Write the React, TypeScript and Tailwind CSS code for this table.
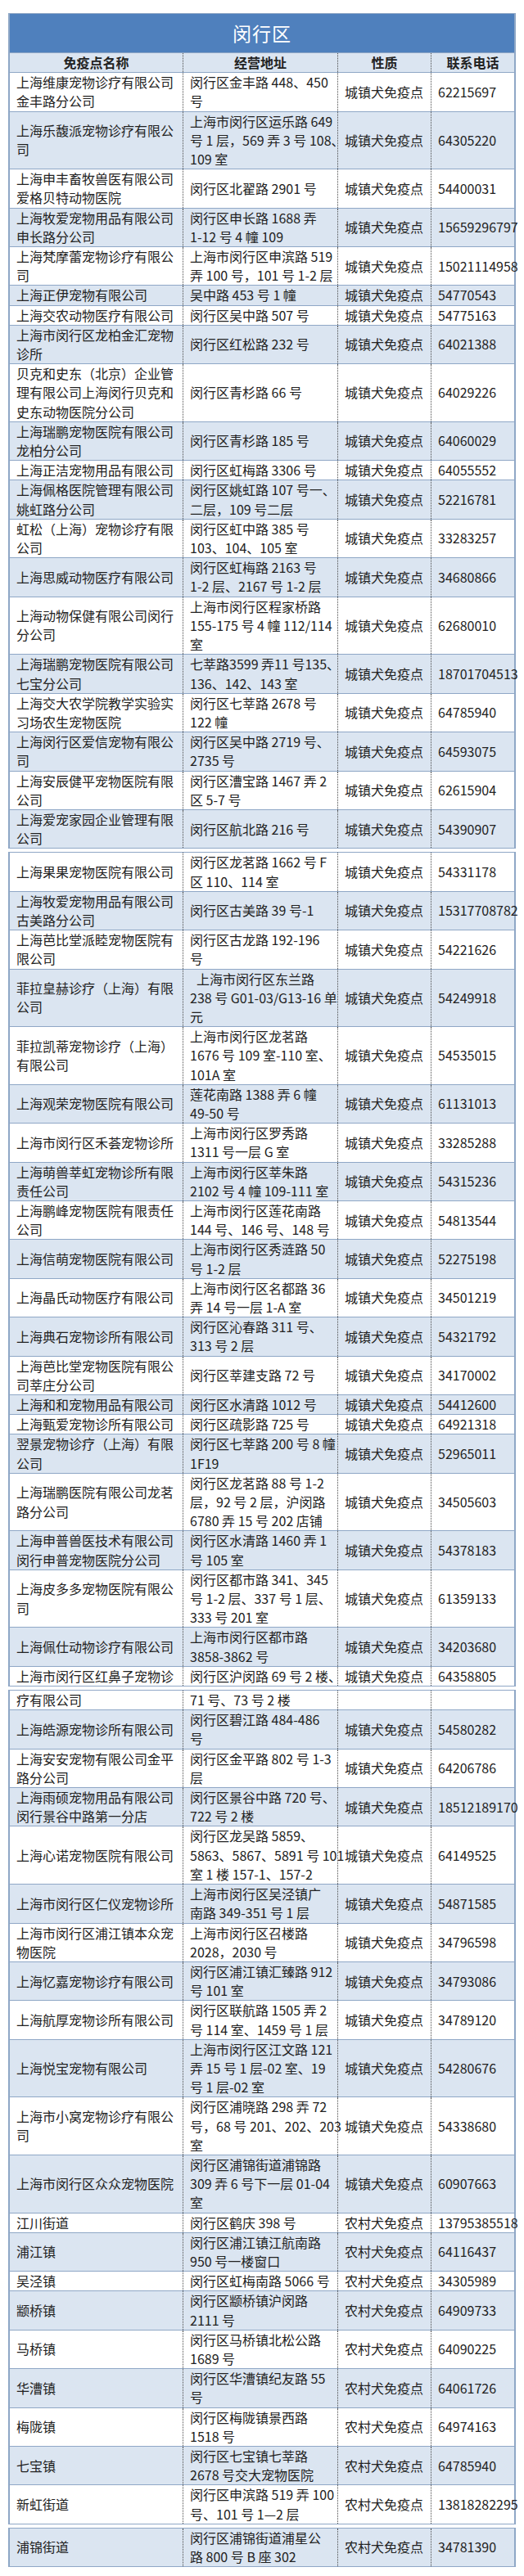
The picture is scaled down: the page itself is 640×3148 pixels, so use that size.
import React from 'react'

type Row = { n: string[]; a: string[]; k?: string; t?: string }

const CZ = '城镇犬免疫点'
const NC = '农村犬免疫点'

// 第一张表（带标题和表头）
const part1: Row[] = [
  { n: ['上海维康宠物诊疗有限公司', '金丰路分公司'], a: ['闵行区金丰路 448、450', '号'], k: CZ, t: '62215697' },
  { n: ['上海乐馥派宠物诊疗有限公', '司'], a: ['上海市闵行区运乐路 649', '号 1 层，569 弄 3 号 108、', '109 室'], k: CZ, t: '64305220' },
  { n: ['上海申丰畜牧兽医有限公司', '爱格贝特动物医院'], a: ['闵行区北翟路 2901 号'], k: CZ, t: '54400031' },
  { n: ['上海牧爱宠物用品有限公司', '申长路分公司'], a: ['闵行区申长路 1688 弄', '1-12 号 4 幢 109'], k: CZ, t: '15659296797' },
  { n: ['上海梵摩蕾宠物诊疗有限公', '司'], a: ['上海市闵行区申滨路 519', '弄 100 号，101 号 1-2 层'], k: CZ, t: '15021114958' },
  { n: ['上海正伊宠物有限公司'], a: ['吴中路 453 号 1 幢'], k: CZ, t: '54770543' },
  { n: ['上海交农动物医疗有限公司'], a: ['闵行区吴中路 507 号'], k: CZ, t: '54775163' },
  { n: ['上海市闵行区龙柏金汇宠物', '诊所'], a: ['闵行区红松路 232 号'], k: CZ, t: '64021388' },
  { n: ['贝克和史东（北京）企业管', '理有限公司上海闵行贝克和', '史东动物医院分公司'], a: ['闵行区青杉路 66 号'], k: CZ, t: '64029226' },
  { n: ['上海瑞鹏宠物医院有限公司', '龙柏分公司'], a: ['闵行区青杉路 185 号'], k: CZ, t: '64060029' },
  { n: ['上海正洁宠物用品有限公司'], a: ['闵行区虹梅路 3306 号'], k: CZ, t: '64055552' },
  { n: ['上海佩格医院管理有限公司', '姚虹路分公司'], a: ['闵行区姚虹路 107 号一、', '二层，109 号二层'], k: CZ, t: '52216781' },
  { n: ['虹松（上海）宠物诊疗有限', '公司'], a: ['闵行区虹中路 385 号', '103、104、105 室'], k: CZ, t: '33283257' },
  { n: ['上海思威动物医疗有限公司'], a: ['闵行区虹梅路 2163 号', '1-2 层、2167 号 1-2 层'], k: CZ, t: '34680866' },
  { n: ['上海动物保健有限公司闵行', '分公司'], a: ['上海市闵行区程家桥路', '155-175 号 4 幢 112/114', '室'], k: CZ, t: '62680010' },
  { n: ['上海瑞鹏宠物医院有限公司', '七宝分公司'], a: ['七莘路3599 弄11 号135、', '136、142、143 室'], k: CZ, t: '18701704513' },
  { n: ['上海交大农学院教学实验实', '习场农生宠物医院'], a: ['闵行区七莘路 2678 号', '122 幢'], k: CZ, t: '64785940' },
  { n: ['上海闵行区爱信宠物有限公', '司'], a: ['闵行区吴中路 2719 号、', '2735 号'], k: CZ, t: '64593075' },
  { n: ['上海安辰健平宠物医院有限', '公司'], a: ['闵行区漕宝路 1467 弄 2', '区 5-7 号'], k: CZ, t: '62615904' },
  { n: ['上海爱宠家园企业管理有限', '公司'], a: ['闵行区航北路 216 号'], k: CZ, t: '54390907' },
]

const part2: Row[] = [
  { n: ['上海果果宠物医院有限公司'], a: ['闵行区龙茗路 1662 号 F', '区 110、114 室'], k: CZ, t: '54331178' },
  { n: ['上海牧爱宠物用品有限公司', '古美路分公司'], a: ['闵行区古美路 39 号-1'], k: CZ, t: '15317708782' },
  { n: ['上海芭比堂派睦宠物医院有', '限公司'], a: ['闵行区古龙路 192-196', '号'], k: CZ, t: '54221626' },
  { n: ['菲拉皇赫诊疗（上海）有限', '公司'], a: ['\u2002上海市闵行区东兰路', '238 号 G01-03/G13-16 单', '元'], k: CZ, t: '54249918' },
  { n: ['菲拉凯蒂宠物诊疗（上海）', '有限公司'], a: ['上海市闵行区龙茗路', '1676 号 109 室-110 室、', '101A 室'], k: CZ, t: '54535015' },
  { n: ['上海观荣宠物医院有限公司'], a: ['莲花南路 1388 弄 6 幢', '49-50 号'], k: CZ, t: '61131013' },
  { n: ['上海市闵行区禾荟宠物诊所'], a: ['上海市闵行区罗秀路', '1311 号一层 G 室'], k: CZ, t: '33285288' },
  { n: ['上海萌兽莘虹宠物诊所有限', '责任公司'], a: ['上海市闵行区莘朱路', '2102 号 4 幢 109-111 室'], k: CZ, t: '54315236' },
  { n: ['上海鹏峰宠物医院有限责任', '公司'], a: ['上海市闵行区莲花南路', '144 号、146 号、148 号'], k: CZ, t: '54813544' },
  { n: ['上海信萌宠物医院有限公司'], a: ['上海市闵行区秀涟路 50', '号 1-2 层'], k: CZ, t: '52275198' },
  { n: ['上海晶氏动物医疗有限公司'], a: ['上海市闵行区名都路 36', '弄 14 号一层 1-A 室'], k: CZ, t: '34501219' },
  { n: ['上海典石宠物诊所有限公司'], a: ['闵行区沁春路 311 号、', '313 号 2 层'], k: CZ, t: '54321792' },
  { n: ['上海芭比堂宠物医院有限公', '司莘庄分公司'], a: ['闵行区莘建支路 72 号'], k: CZ, t: '34170002' },
  { n: ['上海和和宠物用品有限公司'], a: ['闵行区水清路 1012 号'], k: CZ, t: '54412600' },
  { n: ['上海甄爱宠物诊所有限公司'], a: ['闵行区疏影路 725 号'], k: CZ, t: '64921318' },
  { n: ['翌景宠物诊疗（上海）有限', '公司'], a: ['闵行区七莘路 200 号 8 幢', '1F19'], k: CZ, t: '52965011' },
  { n: ['上海瑞鹏医院有限公司龙茗', '路分公司'], a: ['闵行区龙茗路 88 号 1-2', '层，92 号 2 层，沪闵路', '6780 弄 15 号 202 店铺'], k: CZ, t: '34505603' },
  { n: ['上海申普兽医技术有限公司', '闵行申普宠物医院分公司'], a: ['闵行区水清路 1460 弄 1', '号 105 室'], k: CZ, t: '54378183' },
  { n: ['上海皮多多宠物医院有限公', '司'], a: ['闵行区都市路 341、345', '号 1-2 层、337 号 1 层、', '333 号 201 室'], k: CZ, t: '61359133' },
  { n: ['上海佩仕动物诊疗有限公司'], a: ['上海市闵行区都市路', '3858-3862 号'], k: CZ, t: '34203680' },
  { n: ['上海市闵行区红鼻子宠物诊'], a: ['闵行区沪闵路 69 号 2 楼、'], k: CZ, t: '64358805' },
]

const part3: Row[] = [
  { n: ['疗有限公司'], a: ['71 号、73 号 2 楼'] },
  { n: ['上海皓源宠物诊所有限公司'], a: ['闵行区碧江路 484-486', '号'], k: CZ, t: '54580282' },
  { n: ['上海安安宠物有限公司金平', '路分公司'], a: ['闵行区金平路 802 号 1-3', '层'], k: CZ, t: '64206786' },
  { n: ['上海雨硕宠物用品有限公司', '闵行景谷中路第一分店'], a: ['闵行区景谷中路 720 号、', '722 号 2 楼'], k: CZ, t: '18512189170' },
  { n: ['上海心诺宠物医院有限公司'], a: ['闵行区龙吴路 5859、', '5863、5867、5891 号 101', '室 1 楼 157-1、157-2'], k: CZ, t: '64149525' },
  { n: ['上海市闵行区仁仪宠物诊所'], a: ['上海市闵行区吴泾镇广', '南路 349-351 号 1 层'], k: CZ, t: '54871585' },
  { n: ['上海市闵行区浦江镇本众宠', '物医院'], a: ['上海市闵行区召楼路', '2028，2030 号'], k: CZ, t: '34796598' },
  { n: ['上海忆嘉宠物诊疗有限公司'], a: ['闵行区浦江镇汇臻路 912', '号 101 室'], k: CZ, t: '34793086' },
  { n: ['上海航厚宠物诊所有限公司'], a: ['闵行区联航路 1505 弄 2', '号 114 室、1459 号 1 层'], k: CZ, t: '34789120' },
  { n: ['上海悦宝宠物有限公司'], a: ['上海市闵行区江文路 121', '弄 15 号 1 层-02 室、19', '号 1 层-02 室'], k: CZ, t: '54280676' },
  { n: ['上海市小窝宠物诊疗有限公', '司'], a: ['闵行区浦晓路 298 弄 72', '号，68 号 201、202、203', '室'], k: CZ, t: '54338680' },
  { n: ['上海市闵行区众众宠物医院'], a: ['闵行区浦锦街道浦锦路', '309 弄 6 号下一层 01-04', '室'], k: CZ, t: '60907663' },
  { n: ['江川街道'], a: ['闵行区鹤庆 398 号'], k: NC, t: '13795385518' },
  { n: ['浦江镇'], a: ['闵行区浦江镇江航南路', '950 号一楼窗口'], k: NC, t: '64116437' },
  { n: ['吴泾镇'], a: ['闵行区虹梅南路 5066 号'], k: NC, t: '34305989' },
  { n: ['颛桥镇'], a: ['闵行区颛桥镇沪闵路', '2111 号'], k: NC, t: '64909733' },
  { n: ['马桥镇'], a: ['闵行区马桥镇北松公路', '1689 号'], k: NC, t: '64090225' },
  { n: ['华漕镇'], a: ['闵行区华漕镇纪友路 55', '号'], k: NC, t: '64061726' },
  { n: ['梅陇镇'], a: ['闵行区梅陇镇景西路', '1518 号'], k: NC, t: '64974163' },
  { n: ['七宝镇'], a: ['闵行区七宝镇七莘路', '2678 号交大宠物医院'], k: NC, t: '64785940' },
  { n: ['新虹街道'], a: ['闵行区申滨路 519 弄 100', '号、101 号 1—2 层'], k: NC, t: '13818282295' },
]

const part4: Row[] = [
  { n: ['浦锦街道'], a: ['闵行区浦锦街道浦星公', '路 800 号 B 座 302'], k: NC, t: '34781390' },
]

const rowGrid = 'grid grid-cols-[212px_189px_114px_1fr] border-b border-[#8fa7c6]'

function Cell({ lines, last = false, center = false }: { lines: string[]; last?: boolean; center?: boolean }) {
  return (
    <div
      className={`flex flex-col justify-center px-2 ${center ? 'items-center' : ''} ${
        last ? '' : 'border-r border-dotted border-[#4a4a4a]'
      }`}
    >
      {lines.map((l, i) => (
        <span key={i} className="whitespace-nowrap">
          {l}
        </span>
      ))}
    </div>
  )
}

function Part({ rows, head = false, blueFirst = false }: { rows: Row[]; head?: boolean; blueFirst?: boolean }) {
  return (
    <div className="mx-[10px] border-x-2 border-t border-[#8fa7c6]">
      {head && (
        <>
          <div className="h-[48px] bg-[#4f80bd] border-b border-[#8fa7c6] flex items-center justify-center text-white text-[23px] tracking-[1px]">
            闵行区
          </div>
          <div className={`${rowGrid} bg-[#dbe5f1] font-bold`}>
            <Cell lines={['免疫点名称']} center />
            <Cell lines={['经营地址']} center />
            <Cell lines={['性质']} center />
            <Cell lines={['联系电话']} center last />
          </div>
        </>
      )}
      {rows.map((r, i) => {
        const blue = (i % 2 === 1) !== blueFirst
        return (
          <div key={i} className={`${rowGrid} ${blue ? 'bg-[#dbe5f1]' : 'bg-white'}`}>
            <Cell lines={r.n} />
            <Cell lines={r.a} />
            <Cell lines={r.k ? [r.k] : []} />
            <Cell lines={r.t ? [r.t] : []} last />
          </div>
        )
      })}
    </div>
  )
}

export default function App() {
  return (
    <div className="w-[640px] min-h-[3148px] bg-white pt-[16px] flex flex-col gap-[4px] text-[16px] leading-[23.2px] text-[#222] font-['Noto_Sans_CJK_SC','Noto_Sans',sans-serif]">
      <Part rows={part1} head />
      <Part rows={part2} />
      <Part rows={part3} />
      <Part rows={part4} blueFirst />
    </div>
  )
}
